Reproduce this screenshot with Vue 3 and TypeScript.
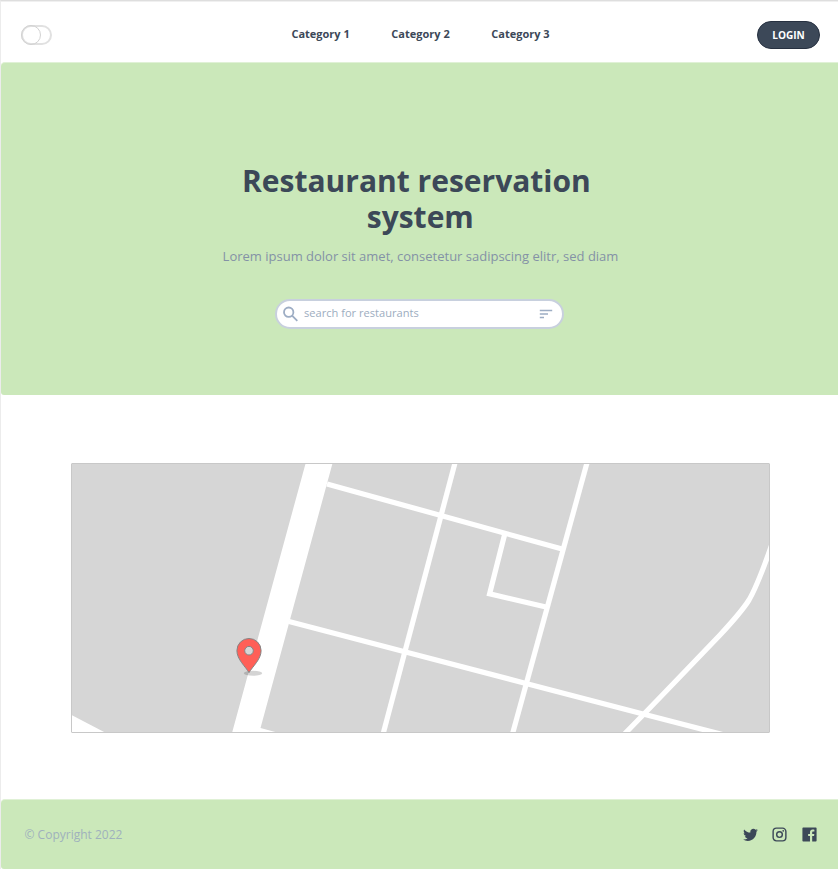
<script setup lang="ts">
import { ref } from 'vue'

const categories: string[] = ['Category 1', 'Category 2', 'Category 3']
const titleLines: string[] = ['Restaurant reservation ', 'system']
const query = ref<string>('')
const streets: string[] = [
  'M327 484 L563 549.3',
  'M455.5 461 L382.8 735',
  'M587.5 461 L512.2 735',
  'M504.5 535 L489.6 593.8 L547 607.2',
  'M289 621.5 L420 655.7 L526 683.5 L644 714.3 L722.5 734.5',
  'M772 544 C764 567 756 588 749 600 C744 608 733 621 720 635 C700 656 668 689 644 714 L623.5 735',
]
</script>

<template>
  <div class="page">
    <header class="topbar">
      <div class="side">
        <button class="toggle" aria-label="Toggle"><span class="knob"></span></button>
      </div>
      <nav class="nav">
        <a v-for="c in categories" :key="c">{{ c }}</a>
      </nav>
      <div class="side end"><button class="login">LOGIN</button></div>
    </header>

    <section class="hero">
      <h1><span v-for="line in titleLines" :key="line">{{ line }}</span></h1>
      <p>Lorem ipsum dolor sit amet, consetetur sadipscing elitr, sed diam</p>
      <label class="search">
        <svg class="glass" viewBox="0 0 16 16">
          <circle cx="5.7" cy="6.2" r="4.7" />
          <path d="M9.1 9.6 L14.3 14.8" />
        </svg>
        <input v-model="query" placeholder="search for restaurants" />
        <svg class="filter" viewBox="0 0 14 10">
          <path d="M.8 1.4H13.2M.8 5H9M.8 8.6H5" />
        </svg>
      </label>
    </section>

    <main class="content">
      <div class="map">
        <svg viewBox="72 464 697 268">
          <rect x="72" y="464" width="697" height="268" fill="#d6d6d6" />
          <path d="M305.7 463 L332.6 463 L260.5 728 L279 733 L232 733Z" fill="#fff" />
          <path d="M72 715.3 L106 733 H72Z" fill="#fff" />
          <path v-for="s in streets" :key="s" :d="s" class="street" />
          <ellipse cx="253" cy="673.3" rx="9.2" ry="2.5" fill="#000" fill-opacity=".17" />
          <path
            d="M249 672.6 C245.5 666.5 236.9 659.5 236.9 650.6 A12.1 12.1 0 0 1 261.1 650.6 C261.1 659.5 252.5 666.5 249 672.6Z"
            fill="#ff5f57" stroke="#858585"
          />
          <circle cx="249" cy="650.7" r="4.3" fill="#d6d6d6" stroke="#858585" />
        </svg>
      </div>
    </main>

    <footer class="footer">
      <span>© Copyright 2022</span>
      <div class="social">
        <svg viewBox="0 0 24 24">
          <path d="M22.46 6c-.77.35-1.6.58-2.46.69.88-.53 1.56-1.37 1.88-2.38-.83.5-1.75.85-2.72 1.05C18.37 4.5 17.26 4 16 4c-2.35 0-4.27 1.92-4.27 4.29 0 .34.04.67.11.98C8.28 9.09 5.11 7.38 3 4.79c-.37.63-.58 1.37-.58 2.15 0 1.49.75 2.81 1.91 3.56-.71 0-1.37-.2-1.95-.5v.03c0 2.08 1.48 3.82 3.44 4.21a4.22 4.22 0 0 1-1.93.07 4.28 4.28 0 0 0 4 2.98 8.521 8.521 0 0 1-5.33 1.84c-.34 0-.68-.02-1.02-.06C3.44 20.29 5.7 21 8.12 21 16 21 20.33 14.46 20.33 8.79c0-.19 0-.37-.01-.56.84-.6 1.56-1.36 2.14-2.23z" />
        </svg>
        <svg viewBox="0 0 24 24">
          <path d="M7.8 2h8.4C19.4 2 22 4.6 22 7.8v8.4a5.8 5.8 0 0 1-5.8 5.8H7.8C4.6 22 2 19.4 2 16.2V7.8A5.8 5.8 0 0 1 7.8 2m-.2 2A3.6 3.6 0 0 0 4 7.6v8.8C4 18.39 5.61 20 7.6 20h8.8a3.6 3.6 0 0 0 3.6-3.6V7.6C20 5.61 18.39 4 16.4 4H7.6m9.65 1.5a1.25 1.25 0 1 1 0 2.5 1.25 1.25 0 0 1 0-2.5M12 7a5 5 0 1 1 0 10 5 5 0 0 1 0-10m0 2a3 3 0 1 0 0 6 3 3 0 0 0 0-6z" />
        </svg>
        <svg viewBox="0 0 24 24">
          <path d="M20.9 2H3.1A1.1 1.1 0 0 0 2 3.1v17.8A1.1 1.1 0 0 0 3.1 22h9.58v-7.75h-2.6v-3h2.6V9a3.64 3.64 0 0 1 3.88-4c.78 0 1.55 0 2.33.12v2.7H17.3c-1.26 0-1.5.6-1.5 1.47v1.93h3l-.39 3H15.8V22h5.1a1.1 1.1 0 0 0 1.1-1.1V3.1A1.1 1.1 0 0 0 20.9 2z" />
        </svg>
      </div>
    </footer>
  </div>
</template>

<style>
body {
  margin: 0;
  background: #fff;
}
</style>

<style scoped>
.page {
  box-sizing: border-box;
  width: 838px;
  height: 869px;
  overflow: hidden;
  display: flex;
  flex-direction: column;
  border-top: 1px solid #dedede;
  border-left: 1px solid #ececec;
  font-family: 'Open Sans', 'Noto Sans', sans-serif;
  color: #3c4858;
}
.topbar {
  box-sizing: border-box;
  height: 61px;
  flex: none;
  display: flex;
  align-items: center;
  padding: 5px 18px 0 20px;
  border-top: 1px solid #f0f0f0;
}
.side {
  flex: 1;
  display: flex;
}
.end {
  justify-content: flex-end;
}
.toggle {
  box-sizing: border-box;
  width: 31px;
  height: 20px;
  padding: 0;
  border: 2px solid #e1e1e1;
  border-radius: 10px;
  background: #fff;
  display: flex;
}
.knob {
  box-sizing: border-box;
  width: 20px;
  height: 20px;
  flex: none;
  margin: -2px;
  border: 1px solid #d2d2d2;
  border-radius: 50%;
}
.nav {
  display: flex;
  gap: 41.6px;
  font-size: 11px;
  font-weight: 700;
  line-height: 16px;
  padding-bottom: 2px;
}
.login {
  box-sizing: border-box;
  width: 63px;
  height: 28px;
  padding: 0;
  border: 1px solid #263040;
  border-radius: 14px;
  background: #3c4858;
  color: #fff;
  font: 700 10.1px 'Open Sans', sans-serif;
}
.hero {
  box-sizing: border-box;
  height: 333px;
  flex: none;
  display: flex;
  flex-direction: column;
  align-items: center;
  padding: 100px 0 0;
  background: #cbe8ba;
  border-top: 1px solid #e0f1d6;
  border-radius: 4px 0 0 3px;
}
h1 {
  margin: 0;
  padding-left: 1.6px;
  font-size: 30px;
  line-height: 36px;
  font-weight: 700;
  text-align: center;
  white-space: pre;
}
h1 span {
  display: block;
}
p {
  margin: 12px 0 0;
  padding-left: 2px;
  font-size: 13px;
  line-height: 18px;
  color: #8492a6;
}
.search {
  box-sizing: border-box;
  width: 289px;
  height: 30px;
  margin-top: 34px;
  display: flex;
  align-items: center;
  padding: 0 9px 0 6px;
  border: 2px solid #c8d0de;
  border-radius: 15px;
  background: #fff;
}
.search svg {
  flex: none;
  fill: none;
  stroke: #9dadc4;
}
.glass {
  width: 16px;
  height: 16px;
  stroke-width: 1.8;
}
.filter {
  width: 14px;
  height: 10px;
  stroke-width: 1.5;
}
input {
  flex: 1;
  min-width: 0;
  border: 0;
  outline: 0;
  padding: 0 0 3px 5px;
  background: transparent;
  font: 11.1px 'Open Sans', sans-serif;
}
input::placeholder {
  color: #9dadc0;
  opacity: 1;
}
.content {
  flex: 1;
  padding: 68px 68px 0 70px;
}
.map {
  box-sizing: border-box;
  width: 699px;
  height: 270px;
  border: 1px solid #c8c8c8;
  border-radius: 1px;
}
.map svg {
  display: block;
  width: 697px;
  height: 268px;
}
.street {
  fill: none;
  stroke: #fff;
  stroke-width: 5.2;
}
.footer {
  box-sizing: border-box;
  height: 70px;
  flex: none;
  display: flex;
  align-items: center;
  justify-content: space-between;
  padding: 0 20.4px 1px 23.5px;
  background: #cbe8ba;
  border-top: 1px solid #e0f1d6;
  border-radius: 4px 0 0 3px;
  font-size: 12px;
  color: #9fb1bd;
}
.social {
  display: flex;
  gap: 12.4px;
}
.social svg {
  width: 17px;
  height: 17px;
  fill: #3c4858;
}
</style>
